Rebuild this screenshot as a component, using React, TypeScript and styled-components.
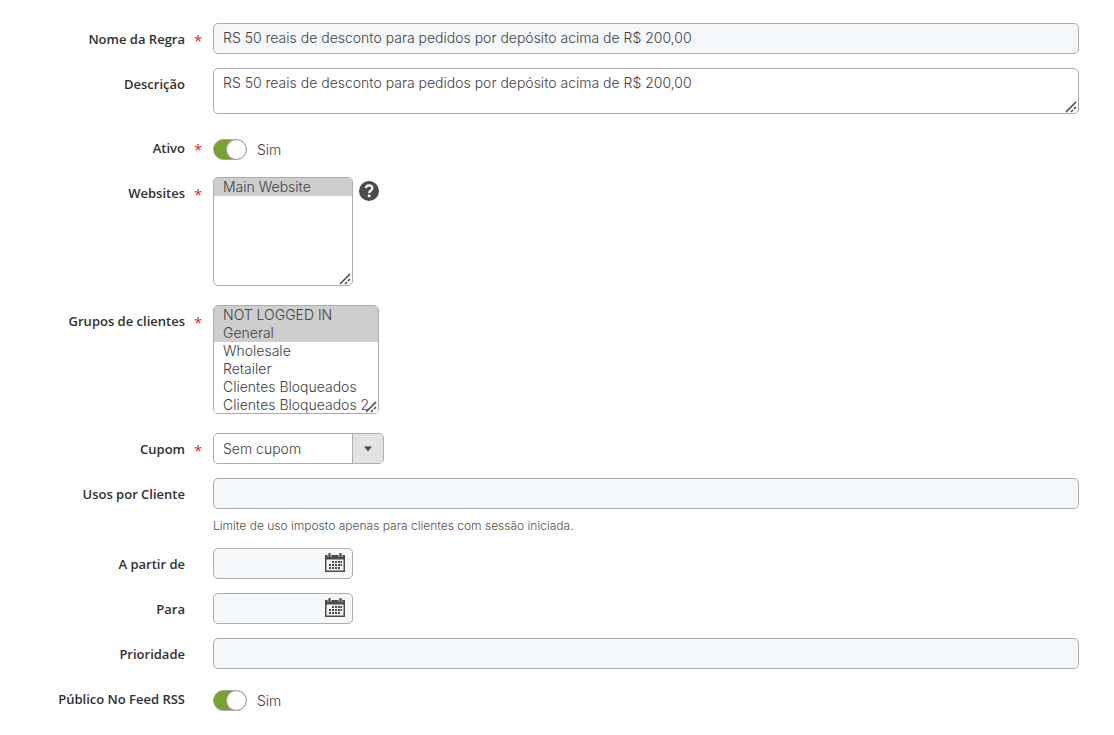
import React from "react";
import styled, { createGlobalStyle, css } from "styled-components";

const GlobalStyle = createGlobalStyle`
  *, *::before, *::after { box-sizing: border-box; }
  body {
    margin: 0;
    background: #fff;
    color: #41403f;
    font-family: Inter, "Open Sans", sans-serif;
    font-size: 14px;
    font-weight: 300;
  }
`;

const Form = styled.form`
  display: flex;
  flex-direction: column;
  gap: 14px;
  padding: 23px 35px 23px 20px;
`;

const Row = styled.div`
  display: grid;
  grid-template-columns: 165px 28px minmax(0, 1fr);
`;

const Label = styled.label`
  height: 31px;
  color: #303030;
  font: 600 13px/32px "Open Sans", sans-serif;
  text-align: right;
  white-space: nowrap;
`;

const Star = styled.span`
  height: 31px;
  padding-left: 9px;
  color: #e22626;
  font: 400 15px/35px "Open Sans", sans-serif;
`;

const Control = styled.div<{ $after?: number }>`
  display: flex;
  flex-wrap: wrap;
  align-items: flex-start;
  padding-bottom: ${(p) => p.$after ?? 0}px;
`;

const box = css`
  margin: 0;
  border: 1px solid #adadad;
  border-radius: 5px;
  color: #41403f;
  font: inherit;
  outline: none;
`;

const grip = css`
  &::-webkit-scrollbar {
    width: 0;
    height: 0;
  }
  &::-webkit-resizer {
    background: url("data:image/svg+xml,%3Csvg xmlns='http://www.w3.org/2000/svg' width='15' height='15'%3E%3Cpath d='M3 14L13 4M8 14L10 12M11 11L13 9' stroke='%23514943' stroke-width='1.6' fill='none'/%3E%3C/svg%3E") right bottom no-repeat;
  }
`;

const TextInput = styled.input`
  ${box}
  width: 100%;
  height: 31px;
  padding: 0 9px 2px;
  background: #f4f8fb;
`;

const TextArea = styled.textarea`
  ${box}
  ${grip}
  display: block;
  width: 100%;
  height: 46px;
  padding: 5px 9px;
  line-height: 18px;
  background: #fff;
`;

const MultiSelect = styled.select<{ $width: number }>`
  ${box}
  ${grip}
  width: ${(p) => p.$width}px;
  height: 109px;
  padding: 0;
  background: #fff;
  overflow: auto;
  resize: both;

  option {
    height: 18px;
    min-height: 18px;
    padding: 0 9px;
    color: #41403f;
    font: 300 14px/18px Inter, "Open Sans", sans-serif;
  }
  option:checked {
    background: #cecece linear-gradient(#cecece, #cecece);
  }
`;

const Help = styled.button`
  width: 20px;
  height: 20px;
  margin: 4px 0 0 6px;
  padding: 0;
  border: 0;
  background: none;
  svg { display: block; }
`;

const SelectWrap = styled.div`
  display: grid;
  grid-template-columns: 139px 32px;
`;

const Select = styled.select`
  ${box}
  grid-area: 1 / 1 / 2 / 3;
  height: 31px;
  padding: 0 40px 0 9px;
  appearance: none;
  background: #fff;
`;

const SelectArrow = styled.span`
  grid-area: 1 / 2;
  display: grid;
  place-items: center;
  margin: 1px 1px 1px 0;
  border-left: 1px solid #adadad;
  border-radius: 0 4px 4px 0;
  background: #e3e3e3;
  pointer-events: none;
  z-index: 1;
`;

const Note = styled.p`
  width: 100%;
  margin: 8px 0 0;
  color: #51504f;
  font-size: 12px;
  line-height: 17px;
`;

const DateBox = styled.div`
  ${box}
  display: flex;
  align-items: center;
  width: 140px;
  height: 31px;
  padding: 0 7px 2px 0;
  background: #f4f8fb;
`;

const DateInput = styled.input`
  flex: 1;
  min-width: 0;
  padding: 0 9px;
  border: 0;
  background: none;
  font: inherit;
  outline: none;
`;

const DateButton = styled.button`
  padding: 0;
  border: 0;
  background: none;
  svg { display: block; }
`;

const ToggleLine = styled.div`
  display: flex;
  align-items: center;
  gap: 10px;
  height: 31px;
  padding-top: 4px;
`;

const Toggle = styled.input`
  appearance: none;
  width: 34px;
  height: 21px;
  margin: 0;
  border: 1px solid #aaa6a0;
  border-radius: 11px;
  background: #79a22e;
  overflow: hidden;

  &::before {
    content: "";
    display: block;
    width: 19px;
    height: 19px;
    border-radius: 50%;
    background: #fff;
    box-shadow: 0 0 0 1px #aaa6a0;
  }
  &:checked::before { margin-left: auto; }
  &:not(:checked) { background: #e3e3e3; }
`;

const CalendarIcon = () => (
  <svg width="20" height="19" viewBox="0 0 20 19" fill="#514943" aria-hidden="true">
    <path fillRule="evenodd" d="M0 2h20v17H0zM1.500 6.500v11h17v-11z" />
    <path d="M2.500 1h4v3h-4zM13.500 1h4v3h-4z" fill="#c9cbcc" />
    <path d="M3.500 0h2v4h-2zM14.500 0h2v4h-2z" />
    <path d="M7 8h2v2H7zM10 8h2v2h-2zM13 8h2v2h-2zM15.500 8h1.500v2h-1.500zM4 11h2v2H4zM7 11h2v2H7zM10 11h2v2h-2zM13 11h2v2h-2zM15.500 11h1.500v2h-1.500zM4 14h2v2H4zM7 14h2v2H7zM10 14h2v2h-2zM13 14h2v2h-2z" />
  </svg>
);

type ToggleFieldProps = { id: string; label: string; required?: boolean };

type FieldProps = ToggleFieldProps & {
  after?: number;
  children: React.ReactNode;
};

const Field = ({ id, label, required, after, children }: FieldProps) => (
  <Row>
    <Label htmlFor={id}>{label}</Label>
    <Star aria-hidden="true">{required ? "*" : ""}</Star>
    <Control $after={after}>{children}</Control>
  </Row>
);

const ToggleField = (props: ToggleFieldProps) => (
  <Field {...props}>
    <ToggleLine>
      <Toggle id={props.id} type="checkbox" role="switch" defaultChecked />
      <span>Sim</span>
    </ToggleLine>
  </Field>
);

const DateField = ({ id, label }: { id: string; label: string }) => (
  <Field id={id} label={label}>
    <DateBox>
      <DateInput id={id} type="text" />
      <DateButton type="button" aria-label={`Selecionar data: ${label}`}>
        <CalendarIcon />
      </DateButton>
    </DateBox>
  </Field>
);

const RULE = "RS 50 reais de desconto para pedidos por depósito acima de R$ 200,00";
const GROUPS = ["NOT LOGGED IN", "General", "Wholesale", "Retailer", "Clientes Bloqueados", "Clientes Bloqueados 2"];

export default function App() {
  return (
    <>
      <GlobalStyle />
      <Form>
        <Field id="name" label="Nome da Regra" required>
          <TextInput id="name" type="text" defaultValue={RULE} />
        </Field>
        <Field id="description" label="Descrição" after={4}>
          <TextArea id="description" defaultValue={RULE} />
        </Field>
        <ToggleField id="active" label="Ativo" required />
        <Field id="websites" label="Websites" required after={5}>
          <MultiSelect id="websites" multiple $width={140} defaultValue={["Main Website"]}>
            <option>Main Website</option>
          </MultiSelect>
          <Help type="button" aria-label="Ajuda">
            <svg width="20" height="20" viewBox="0 0 20 20" aria-hidden="true">
              <circle cx="10" cy="10" r="10" fill="#514943" />
              <path d="M6.800 7.200C7 5.300 8.200 4.400 10 4.400c2 0 3.300 1.100 3.300 2.800 0 2.300-3.100 2.400-3.100 4.700" fill="none" stroke="#fff" strokeWidth="2.200" />
              <circle cx="10.100" cy="14.800" r="1.500" fill="#fff" />
            </svg>
          </Help>
        </Field>
        <Field id="groups" label="Grupos de clientes" required after={5}>
          <MultiSelect id="groups" multiple $width={166} defaultValue={["NOT LOGGED IN", "General"]}>
            {GROUPS.map((g) => (
              <option key={g}>{g}</option>
            ))}
          </MultiSelect>
        </Field>
        <Field id="coupon" label="Cupom" required>
          <SelectWrap>
            <Select id="coupon">
              <option>Sem cupom</option>
            </Select>
            <SelectArrow>
              <svg width="8" height="6" viewBox="0 0 8 6" aria-hidden="true">
                <path d="M0 0.500h8L4 5.500z" fill="#514943" />
              </svg>
            </SelectArrow>
          </SelectWrap>
        </Field>
        <Field id="uses" label="Usos por Cliente">
          <TextInput id="uses" type="text" />
          <Note>Limite de uso imposto apenas para clientes com sessão iniciada.</Note>
        </Field>
        <DateField id="from" label="A partir de" />
        <DateField id="to" label="Para" />
        <Field id="priority" label="Prioridade">
          <TextInput id="priority" type="text" />
        </Field>
        <ToggleField id="rss" label="Público No Feed RSS" />
      </Form>
    </>
  );
}
